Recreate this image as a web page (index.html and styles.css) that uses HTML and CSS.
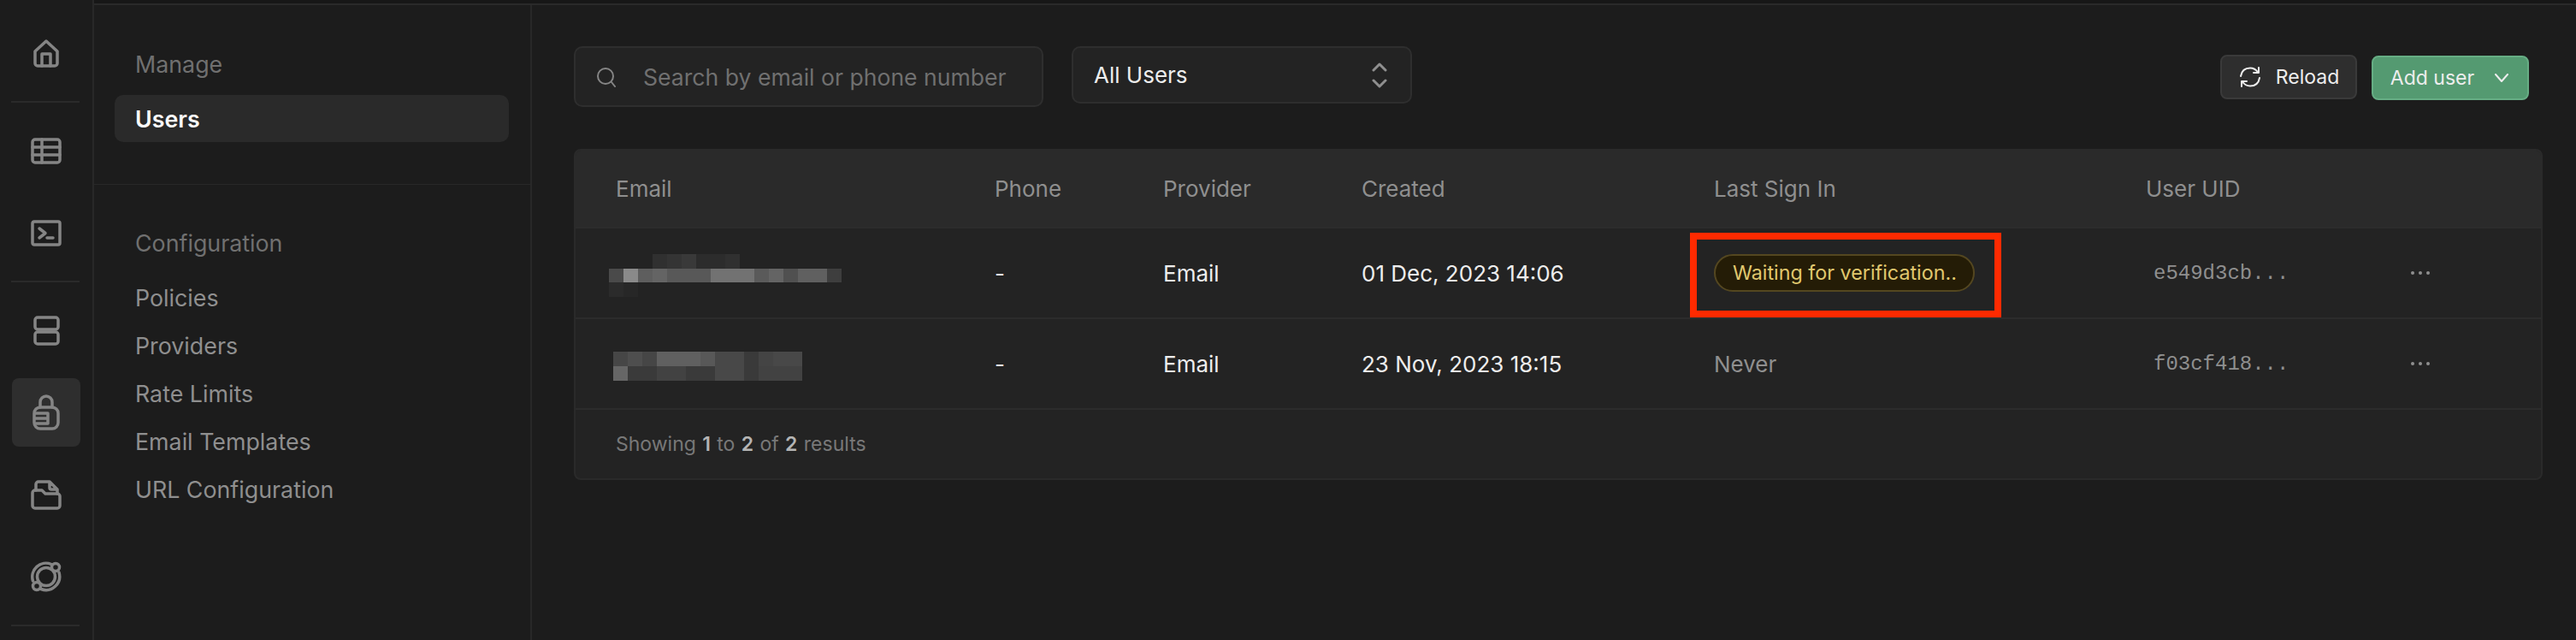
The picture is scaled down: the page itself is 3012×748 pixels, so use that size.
FILE: index.html
```html
<!DOCTYPE html>
<html lang="en">
<head>
<meta charset="utf-8">
<title>Users</title>
<link rel="stylesheet" href="styles.css">
</head>
<body>
<div class="app">
  <nav class="rail">
    <div class="rail-item"><svg class="ic" width="30" height="33" viewBox="0 0 30 33"><path d="M2 14 15 2l13 12v14a3 3 0 0 1-3 3H5a3 3 0 0 1-3-3Z"/><path d="M10 31V17h10v14"/></svg></div>
    <div class="rail-divider"></div>
    <div class="rail-item"><svg class="ic" width="36" height="31" viewBox="0 0 36 31"><rect x="2" y="2" width="32" height="27" rx="3"/><path d="M13 2v27M2 11h32M2 20h32"/></svg></div>
    <div class="rail-item"><svg class="ic" width="36" height="31" viewBox="0 0 36 31"><rect x="2" y="2" width="32" height="27" rx="2"/><path d="m10 10 7 5.5-7 5.5M19 21h7"/></svg></div>
    <div class="rail-divider"></div>
    <div class="rail-item"><svg class="ic" width="31" height="35" viewBox="0 0 31 35"><rect x="2" y="2" width="27" height="14" rx="3"/><rect x="2" y="19" width="27" height="14" rx="3"/></svg></div>
    <div class="rail-item active"><svg class="ic" width="32" height="42" viewBox="0 0 32 42"><rect x="2" y="15" width="28" height="25" rx="7"/><path d="M9 15V9a7 7 0 0 1 14 0v6M3 22h15M3 28h15M4 34h14M18 22v12"/></svg></div>
    <div class="rail-item"><svg class="ic" width="36" height="35" viewBox="0 0 36 35"><path d="M6 12V5a3 3 0 0 1 3-3h13l9 9v5M22 2v7a2 2 0 0 0 2 2h7"/><path d="M2 15a3 3 0 0 1 3-3h8l4 4h14a3 3 0 0 1 3 3v11a3 3 0 0 1-3 3H5a3 3 0 0 1-3-3Z"/></svg></div>
    <div class="rail-item"><svg class="ic" width="36" height="36" viewBox="0 0 36 36"><circle cx="18" cy="18" r="10.5"/><path d="M24 3.5A16 16 0 0 0 2.5 23M12 32.500A16 16 0 0 0 33 13"/><circle cx="29" cy="7" r="4.500"/><circle cx="7" cy="29" r="4.500"/></svg></div>
    <div class="rail-divider"></div>
  </nav>

  <div class="workspace">
    <div class="topline"></div>
    <div class="columns">
      <aside class="panel">
        <section class="panel-section first">
          <h2 class="panel-title">Manage</h2>
          <a class="panel-link current">Users</a>
        </section>
        <section class="panel-section">
          <h2 class="panel-title">Configuration</h2>
          <a class="panel-link">Policies</a>
          <a class="panel-link">Providers</a>
          <a class="panel-link">Rate Limits</a>
          <a class="panel-link">Email Templates</a>
          <a class="panel-link">URL Configuration</a>
        </section>
      </aside>

      <main class="main">
        <div class="toolbar">
          <div class="search">
            <svg class="thin" width="24" height="24" viewBox="0 0 24 24"><circle cx="11" cy="11" r="9"/><path d="m18 18 4 5"/></svg>
            <span>Search by email or phone number</span>
          </div>
          <div class="select">
            <span>All Users</span>
            <svg class="thick" width="18" height="30" viewBox="0 0 18 30"><path d="m2 9 7-7 7 7M2 21l7 7 7-7"/></svg>
          </div>
          <div class="actions">
            <button class="btn">
              <svg class="light" width="28" height="24" viewBox="0 0 28 24"><path d="M3 11C4 5 8 1.500 14 1.500c4 0 7 2 9 5M25 13c-1 6-5 9.500-11 9.500-4 0-7-2-9-5"/><path d="M24 1v6h-6M4 23v-6h6"/></svg>
              Reload
            </button>
            <button class="btn primary">
              Add user
              <svg class="light" width="16" height="10" viewBox="0 0 16 10"><path d="m1 1 7 8 7-8"/></svg>
            </button>
          </div>
        </div>

        <div class="table">
          <div class="row head">
            <div>Email</div><div>Phone</div><div>Provider</div><div>Created</div><div>Last Sign In</div><div>User UID</div><div></div>
          </div>
          <div class="row">
            <div class="mail">
              <svg class="blur" width="272" height="50" viewBox="0 0 16 3" preserveAspectRatio="none" shape-rendering="crispEdges">
                <rect x="3" y="0" width="1" height="1" fill="#303030"/><rect x="4" y="0" width="1" height="1" fill="#343434"/><rect x="5" y="0" width="1" height="1" fill="#393939"/><rect x="6" y="0" width="2" height="1" fill="#2c2c2c"/><rect x="8" y="0" width="1" height="1" fill="#303030"/>
                <rect x="0" y="1" width="1" height="1" fill="#4a4a4a"/><rect x="1" y="1" width="1" height="1" fill="#8a8a8a"/><rect x="2" y="1" width="1" height="1" fill="#5e5e5e"/><rect x="3" y="1" width="1" height="1" fill="#646464"/><rect x="4" y="1" width="3" height="1" fill="#585858"/><rect x="7" y="1" width="3" height="1" fill="#727272"/><rect x="10" y="1" width="1" height="1" fill="#5a5a5a"/><rect x="11" y="1" width="1" height="1" fill="#646464"/><rect x="12" y="1" width="1" height="1" fill="#505050"/><rect x="13" y="1" width="2" height="1" fill="#606060"/><rect x="15" y="1" width="1" height="1" fill="#3e3e3e"/>
                <rect x="0" y="2" width="1" height="1" fill="#2b2b2b"/><rect x="1" y="2" width="1" height="1" fill="#272727"/>
              </svg>
            </div>
            <div class="val">-</div><div class="val">Email</div><div class="val">01 Dec, 2023 14:06</div>
            <div class="sign">
              <span class="badge">Waiting for verification..</span>
              <span class="callout"></span>
            </div>
            <div class="uid">e549d3cb...</div>
            <div class="more"><svg width="24" height="6" viewBox="0 0 24 6"><circle cx="3" cy="3" r="2"/><circle cx="12" cy="3" r="2"/><circle cx="21" cy="3" r="2"/></svg></div>
          </div>
          <div class="row">
            <div class="mail">
              <svg class="blur second" width="221" height="34" viewBox="0 0 13 2" preserveAspectRatio="none" shape-rendering="crispEdges">
                <rect x="0" y="0" width="1" height="1" fill="#464646"/><rect x="1" y="0" width="1" height="1" fill="#4e4e4e"/><rect x="2" y="0" width="1" height="1" fill="#464646"/><rect x="3" y="0" width="3" height="1" fill="#606060"/><rect x="6" y="0" width="1" height="1" fill="#585858"/><rect x="7" y="0" width="2" height="1" fill="#484848"/><rect x="9" y="0" width="1" height="1" fill="#3a3a3a"/><rect x="10" y="0" width="1" height="1" fill="#444"/><rect x="11" y="0" width="2" height="1" fill="#484848"/>
                <rect x="0" y="1" width="1" height="1" fill="#666"/><rect x="1" y="1" width="2" height="1" fill="#3a3a3a"/><rect x="3" y="1" width="2" height="1" fill="#424242"/><rect x="5" y="1" width="2" height="1" fill="#3a3a3a"/><rect x="7" y="1" width="2" height="1" fill="#484848"/><rect x="9" y="1" width="1" height="1" fill="#3a3a3a"/><rect x="10" y="1" width="3" height="1" fill="#424242"/>
              </svg>
            </div>
            <div class="val">-</div><div class="val">Email</div><div class="val">23 Nov, 2023 18:15</div>
            <div class="never">Never</div>
            <div class="uid">f03cf418...</div>
            <div class="more"><svg width="24" height="6" viewBox="0 0 24 6"><circle cx="3" cy="3" r="2"/><circle cx="12" cy="3" r="2"/><circle cx="21" cy="3" r="2"/></svg></div>
          </div>
          <div class="foot">Showing <b>1</b> to <b>2</b> of <b>2</b> results</div>
        </div>
      </main>
    </div>
  </div>
</div>
</body>
</html>
```
FILE: styles.css
```css
* { box-sizing: border-box; }
html, body { margin: 0; height: 100%; background: #1c1c1c; overflow: hidden; }
body { font-family: Inter, "Liberation Sans", sans-serif; color: #ededed; }
svg { display: block; fill: none; }
.app { display: flex; height: 748px; }

.rail { width: 110px; flex: none; border-right: 2px solid #282828; padding: 22px 16px 0 14px; display: flex; flex-direction: column; gap: 16px; }
.rail-item { height: 80px; width: 80px; border-radius: 8px; display: flex; align-items: center; justify-content: center; }
.rail-item.active { background: #2e2e2e; }
.rail-divider { height: 2px; margin: 0 0 0 -1px; width: 80px; background: #2a2a2a; flex: none; }
.ic { stroke: #858585; stroke-width: 3.5; stroke-linejoin: round; stroke-linecap: round; }

.workspace { flex: 1; min-width: 0; display: flex; flex-direction: column; }
.topline { height: 6px; background: #171717; border-bottom: 2px solid #2a2a2a; flex: none; }
.columns { flex: 1; display: flex; min-height: 0; }

.panel { width: 512px; flex: none; border-right: 2px solid #282828; }
.panel-section { padding: 40px 25px 0 24px; }
.panel-section.first { padding: 41px 25px 49px 24px; border-bottom: 1px solid #282828; }
.panel-title { margin: 0 0 8px; height: 56px; padding-left: 24px; display: flex; align-items: center; font-size: 26.800px; font-weight: 400; color: #707070; }
.panel-link { height: 56px; padding-left: 24px; display: flex; align-items: center; font-size: 26.800px; color: #8f8f8f; }
.panel-link.current { height: 55px; background: #2a2a2a; border-radius: 10px; color: #fafafa; font-weight: 600; }

.main { flex: 1; min-width: 0; padding: 48px 39px 0 49px; }
.toolbar { display: flex; align-items: flex-start; height: 120px; padding-right: 16px; }
.search { width: 549px; height: 71px; background: #232323; border: 2px solid #2e2e2e; border-radius: 10px; display: flex; align-items: center; gap: 31px; padding-left: 24px; font-size: 26.600px; color: #707070; }
.select { width: 398px; height: 67px; margin-left: 33px; background: #232323; border: 2px solid #2e2e2e; border-radius: 10px; display: flex; align-items: center; justify-content: space-between; padding: 0 27px 0 24px; font-size: 26px; color: #ededed; }
.actions { margin-left: auto; margin-top: 10px; display: flex; gap: 17px; }
.thin { stroke: #858585; stroke-width: 2; stroke-linecap: round; }
.thick { stroke: #8f8f8f; stroke-width: 3; stroke-linecap: round; stroke-linejoin: round; }
.light { stroke: #ededed; stroke-width: 2; stroke-linecap: round; stroke-linejoin: round; }

.btn { height: 52px; width: 160px; font: inherit; font-size: 23px; color: #ededed; background: #2e2e2e; border: 2px solid #3a3a3a; border-radius: 8px; display: flex; align-items: center; justify-content: center; gap: 16px; padding: 0; }
.btn.primary { width: 184px; margin-top: 1px; background: #549a71; border-color: #66ad84; gap: 24px; padding-right: 2px; }

.table { background: #232323; border: 2px solid #2a2a2a; border-radius: 8px; overflow: hidden; }
.row { display: grid; grid-template-columns: 443px 197px 232px 412px 505px 301px 1fr; align-items: center; height: 106px; padding-left: 47px; border-bottom: 2px solid #2c2c2c; font-size: 26px; }
.row.head { height: 91px; background: #2a2a2a; color: #8f8f8f; }
.val { color: #ededed; }
.mail { position: relative; height: 100%; }
.blur { position: absolute; left: -8px; top: 30px; }
.blur.second { left: -3px; top: 38px; }
.sign { position: relative; }
.badge { display: inline-block; height: 44px; line-height: 40px; padding: 0 19px 0 20px; font-size: 23.300px; color: #e0c86e; background: #241c06; border: 2px solid #544720; border-radius: 22px; white-space: nowrap; }
.callout { position: absolute; left: -28px; top: -25px; width: 364px; height: 99px; border: 8px solid #ff2a00; }
.never { color: #8f8f8f; }
.uid { padding-left: 9px; font-family: "Liberation Mono", monospace; font-size: 24px; color: #8f8f8f; }
.more { padding-left: 8px; }
.more svg { fill: #8f8f8f; }
.foot { height: 80px; padding-left: 47px; display: flex; align-items: center; gap: 0.32em; font-size: 23px; color: #787878; }
.foot b { color: #b4b4b4; font-weight: 600; }
```
